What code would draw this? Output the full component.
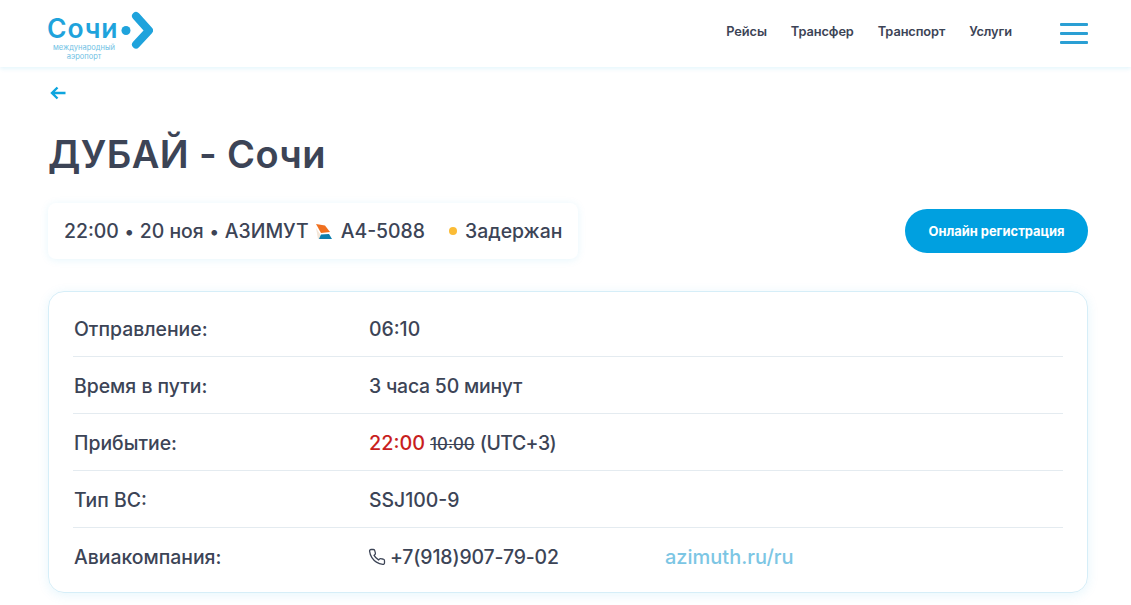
<script>
  const rows = [
    { label: 'Отправление:', value: '06:10' },
    { label: 'Время в пути:', value: '3 часа 50 минут' },
    { label: 'Тип ВС:', value: 'SSJ100-9' }
  ];
</script>

<div class="page">
  <header class="header">
    <a class="logo" href="#top">
      <div class="logo-main">
        <span class="logo-word">Сочи</span>
        <svg class="logo-mark" viewBox="0 0 40 40" width="40" height="40">
          <circle cx="13" cy="19.500" r="4.500" fill="#1fa3dc" />
          <path d="M23 5 L36 19.500 L23 33.500" fill="none" stroke="#1fa3dc" stroke-width="8" stroke-linecap="round" stroke-linejoin="round" />
        </svg>
      </div>
      <div class="logo-sub">международный<br />аэропорт</div>
    </a>
    <nav class="nav">
      <a href="#top">Рейсы</a>
      <a href="#top">Трансфер</a>
      <a href="#top">Транспорт</a>
      <a href="#top">Услуги</a>
    </nav>
    <div class="burger"><i></i><i></i><i></i></div>
  </header>

  <main class="main">
    <svg class="back" viewBox="0 0 16 16" width="16" height="16">
      <path d="M15.500 8H1.500M7.500 2.500L2 8L7.500 13.500" fill="none" stroke="#0ea5de" stroke-width="2.400" />
    </svg>
    <h1>ДУБАЙ - Сочи</h1>
    <div class="flight-row">
      <div class="chip">
        <span>22:00</span><b class="dot">•</b><span class="date">20 ноя</span><b class="dot">•</b><span>АЗИМУТ</span>
        <svg class="airline" viewBox="0 0 16 15" width="16" height="15">
          <path d="M0 0 L9 1.500 L14 8 L5 9 Z" fill="#f0701f" />
          <path d="M0 4 L4 10 L6 15 L2 15 Z" fill="#f3e6d8" />
          <path d="M5 10.500 L13 10 L16 15 L3 15 Z" fill="#0d7fae" />
        </svg>
        <span>А4-5088</span>
        <span class="status"><em></em>Задержан</span>
      </div>
      <a class="cta" href="#top">Онлайн регистрация</a>
    </div>

    <section class="card">
      <div class="row"><div class="label">{rows[0].label}</div><div>{rows[0].value}</div></div>
      <div class="row"><div class="label">{rows[1].label}</div><div class="tight">{rows[1].value}</div></div>
      <div class="row">
        <div class="label">Прибытие:</div>
        <div><span class="red">22:00</span> <s>10:00</s> <span class="utc">(UTC+3)</span></div>
      </div>
      <div class="row"><div class="label">{rows[2].label}</div><div>{rows[2].value}</div></div>
      <div class="row">
        <div class="label">Авиакомпания:</div>
        <div class="phone">
          <svg viewBox="0 0 24 24" width="18" height="18">
            <path d="M22 16.900v3a2 2 0 0 1-2.200 2 19.800 19.800 0 0 1-8.600-3.100 19.500 19.500 0 0 1-6-6A19.800 19.800 0 0 1 2.100 4.200 2 2 0 0 1 4.100 2h3a2 2 0 0 1 2 1.700c.1 1 .4 1.900.7 2.800a2 2 0 0 1-.5 2.100L8.100 9.900a16 16 0 0 0 6 6l1.300-1.300a2 2 0 0 1 2.100-.4c.9.3 1.800.6 2.800.7a2 2 0 0 1 1.700 2z" fill="none" stroke="#3c4456" stroke-width="1.700" />
          </svg>
          <span class="num">+7(918)907-79-02</span>
        </div>
        <a class="site" href="#top">azimuth.ru/ru</a>
      </div>
    </section>
  </main>
</div>

<style>
  :global(body) { margin: 0; background: #fff; }
  .page { font-family: "Inter", "Open Sans", sans-serif; color: #3c4456; height: 605px; overflow: hidden; }
  a { text-decoration: none; color: inherit; }
  .header { height: 67px; box-sizing: border-box; display: flex; align-items: center; padding: 0 43px 0 48px; box-shadow: 0 2px 4px rgba(14,165,222,.1); }
  .logo { display: block; width: 110px; margin-top: 5px; }
  .logo-main { display: flex; align-items: center; height: 38px; }
  .logo-word { font: 600 26.500px/22px "Inter", sans-serif; color: #1fa3dc; letter-spacing: .9px; margin: -6px 0 0 -1px; }
  .logo-mark { margin-left: -5px; flex: none; }
  .logo-sub { width: 72px; font-size: 7.500px; line-height: 9px; color: #6fbfe4; text-align: center; margin-top: -7px; }
  .nav { margin-left: auto; display: flex; gap: 24px; font-size: 12.800px; font-weight: 600; letter-spacing: -.1px; margin-top: -4px; }
  .burger { margin-left: 48px; width: 28px; display: flex; flex-direction: column; gap: 6px; margin-top: -1px; }
  .burger i { display: block; height: 3px; background: #2a9fd4; border-radius: 1px; }
  .main { padding: 0 43px 0 48px; }
  .back { display: block; margin: 18px 0 0 2px; }
  h1 { font-size: 38px; line-height: 46px; font-weight: 600; margin: 30px 0 0; letter-spacing: .4px; }
  .flight-row { display: flex; justify-content: space-between; align-items: center; margin-top: 26px; }
  .chip { display: flex; align-items: center; height: 56px; padding: 0 16px; border-radius: 8px; font-size: 19.400px; font-weight: 500; box-shadow: 0 1px 8px rgba(14,165,222,.1); }
  .dot { width: 21px; text-align: center; font-size: 18px; }
  .date { width: 64px; }
  .airline { margin: 0 9px 0 7px; }
  .status { display: flex; align-items: center; margin-left: 24px; }
  .status em { width: 8px; height: 8px; border-radius: 50%; background: #fbbc36; margin-right: 8px; }
  .cta { width: 183px; height: 44px; border-radius: 22px; background: #00a0e0; color: #fff; font-size: 12.900px; font-weight: 700; display: flex; align-items: center; justify-content: center; }
  .card { margin-top: 32px; padding: 8px 24px; border: 1px solid #d6eef8; border-radius: 16px; box-shadow: 0 2px 12px rgba(14,165,222,.1); font-size: 19.400px; font-weight: 500; }
  .row { display: flex; align-items: center; height: 56px; border-top: 1px solid #e4ebf0; padding-top: 1px; box-sizing: content-box; margin-bottom: -1px; }
  .row:first-child { border-top: 0; }
  .label { width: 295px; padding-left: 1px; }
  .tight { letter-spacing: -.2px; }
  .red { color: #c81e1e; font-size: 19.800px; }
  s { font-size: 16.800px; }
  .utc { letter-spacing: -.5px; }
  .phone { display: flex; align-items: center; gap: 4px; width: 296px; margin-left: -1px; box-sizing: border-box; }
  .num { letter-spacing: -.12px; }
  .site { color: #7cc6e4; font-size: 20px; margin-left: 1px; }
</style>
